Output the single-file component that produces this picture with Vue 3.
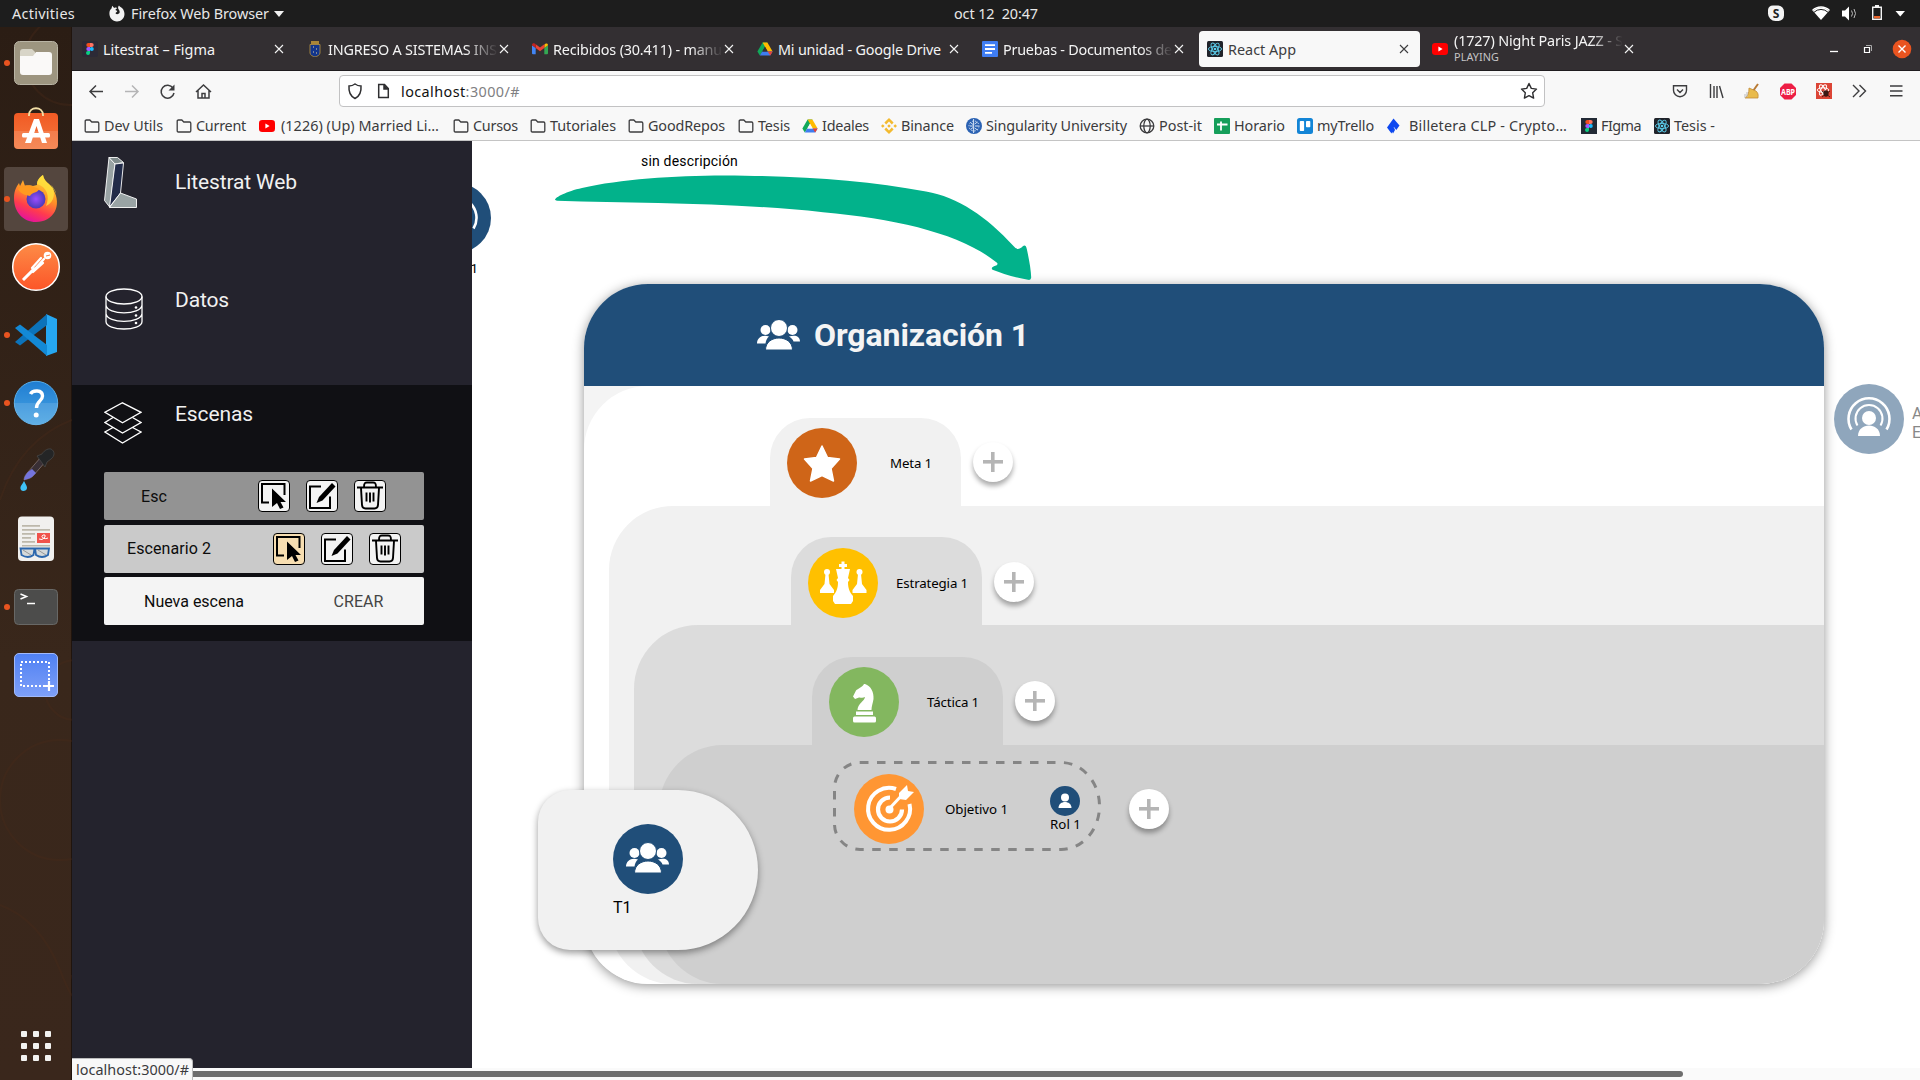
<script setup>
// Keeps a label at a fixed measure by adjusting its tracking.
const vFit = {
  mounted(el, { value }) {
    if (!value) return
    const range = document.createRange()
    range.selectNodeContents(el)
    const w = range.getBoundingClientRect().width
    el.style.letterSpacing = ((value - w) / el.textContent.length).toFixed(3) + 'px'
  },
}

const reactArt =
  '<rect width="16" height="16" rx="1.5" fill="#20232a"/><g fill="none" stroke="#5ccfee" stroke-width=".9"><ellipse cx="8" cy="8" rx="6.6" ry="2.6"/><ellipse cx="8" cy="8" rx="6.6" ry="2.6" transform="rotate(60 8 8)"/><ellipse cx="8" cy="8" rx="6.6" ry="2.6" transform="rotate(120 8 8)"/></g><circle cx="8" cy="8" r="1.3" fill="#5ccfee"/>'
const figmaArt =
  '<path d="M8 2H6.3a2 2 0 0 0 0 4H8z" fill="#f24e1e"/><path d="M8 2h1.7a2 2 0 0 1 0 4H8z" fill="#ff7262"/><path d="M8 6H6.3a2 2 0 0 0 0 4H8z" fill="#a259ff"/><circle cx="9.8" cy="8" r="2" fill="#1abcfe"/><path d="M8 10H6.3a2 2 0 1 0 1.7 2z" fill="#0acf83"/>'
const driveArt =
  '<path d="M5.6 1.5h4.8L5 11 2.8 14.6.4 10.5z" fill="#11a85a"/><path d="M5.6 1.5h4.8l5.2 9h-4.9z" fill="#ffbb00"/><path d="M2.8 14.6 5.2 10.5h10.4l-2.4 4.1z" fill="#3f7df0"/><path d="m10.7 10.5 4.9 0-2.4 4.1z" fill="#ea4335"/><path d="m8 5.8 2.6 4.7H5.3z" fill="#332f32"/>'

const icons = {
  folder: '<path d="M1.2 3.2c0-.8.4-1.200 1.200-1.200h3.400l2 2h5.800c.8 0 1.200.4 1.200 1.200v7.600c0 .8-.4 1.200-1.200 1.200H2.400c-.8 0-1.200-.4-1.200-1.200z" fill="none" stroke="#3c3c3e" stroke-width="1.3"/>',
  youtube: '<rect y="2" width="16" height="12" rx="3.2" fill="#f00"/><path d="m6.400 5.500 4.200 2.500-4.200 2.500z" fill="#fff"/>',
  drive: driveArt,
  driveLight: driveArt.replace('#332f32', '#f8f8f8'),
  binance:
    '<g fill="#f3ba2f"><path d="m8 0 4.600 4.600-1.800 1.800L8 3.600 5.200 6.400 3.400 4.600z"/><path d="m8 16 4.600-4.600-1.800-1.800L8 12.400 5.200 9.600l-1.800 1.800zM1.800 6.200 3.600 8 1.800 9.800 0 8zM14.200 6.200 16 8l-1.800 1.800L12.400 8zM8 6.200 9.800 8 8 9.800 6.200 8z"/></g>',
  su: '<circle cx="8" cy="8" r="8" fill="#2b62b3"/><g stroke="#d5e3f5" stroke-width="1" fill="none"><path d="M7.600 1v14M4.500 4.500l2.500 2M4 8h3M4.500 11.500l2.500-2M11.500 4 8.600 6M12.500 8H9M11.500 12 8.600 10"/><circle cx="8" cy="8" r="5" stroke-dasharray="1.500 1.500"/></g>',
  globe: '<g fill="none" stroke="#3c3c3e" stroke-width="1.300"><circle cx="8" cy="8" r="6.800"/><ellipse cx="8" cy="8" rx="3.200" ry="6.800"/><path d="M1.200 8h13.600"/></g>',
  sheets: '<rect width="16" height="16" rx="1" fill="#159e5a"/><path d="M7 3.500v9M3 6.500h10.500" stroke="#fff" stroke-width="1.800"/>',
  trello: '<rect width="16" height="16" rx="2.500" fill="#1385d6"/><rect x="2.800" y="3" width="4.300" height="10" rx=".8" fill="#fff"/><rect x="9" y="3" width="4.300" height="6.300" rx=".8" fill="#fff"/>',
  budaBlue: '<path d="m7.500.5 6 7-3.200 4.500-2.300-3-2.500 6.500L1 9.500z" fill="#0d48f0"/><path d="m4.800 11.500 3.200-2 1 2.500-2 3.500z" fill="#0d48f0"/>',
  figma: '<rect width="16" height="16" fill="#222a35"/>' + figmaArt,
  figmaTab: '<rect width="16" height="16" rx="2" fill="#2c2a36"/>' + figmaArt,
  react: reactArt,
  shieldUni: '<path d="M4 0h8v3H4z" fill="#a98537"/><path d="M3 3.500h10v8.500c0 2-3 3.500-5 4-2-.5-5-2-5-4z" fill="#12358c" stroke="#a98a43" stroke-width=".9"/><path d="M6 6h1M9 8h1M6 11h1M9 12h1" stroke="#e8d9a0"/>',
  gmail: '<path d="M1 13.200h2.700V7L0 4.200v8a1 1 0 0 0 1 1z" fill="#4285f4"/><path d="M12.300 13.200H15a1 1 0 0 0 1-1v-8L12.300 7z" fill="#34a853"/><path d="M12.300 3.800V7L16 4.200c0-1.800-1.600-2.200-2.600-1.400z" fill="#fbbc04"/><path d="M3.700 7V3.200L8 6.400l4.300-3.200V7L8 10.200z" fill="#ea4335"/><path d="M0 4.200 3.700 7V3.200l-1.100-.6C1.600 2 0 2.400 0 4.200z" fill="#c5221f"/>',
  docs: '<rect width="16" height="16" rx="1" fill="#3f7df3"/><path d="M3 4.200h10M3 8h10M3 11.800h7" stroke="#fff" stroke-width="1.800"/>',
}

const tabs = [
  { icon: 'figmaTab', text: 'Litestrat – Figma', w: 112 },
  { icon: 'shieldUni', text: 'INGRESO A SISTEMAS INS', w: 169, fade: true },
  { icon: 'gmail', text: 'Recibidos (30.411) - manu', w: 169, fade: true },
  { icon: 'drive', text: 'Mi unidad - Google Drive', w: 163 },
  { icon: 'docs', text: 'Pruebas - Documentos de', w: 169, fade: true },
  { icon: 'react', text: 'React App', w: 68, active: true },
  { icon: 'youtube', text: '(1727) Night Paris JAZZ - S', w: 169, fade: true, sub: 'PLAYING' },
]

const bookmarks = [
  { icon: 'folder', text: 'Dev Utils', x: 84, t: 104, w: 59 },
  { icon: 'folder', text: 'Current', x: 176, t: 196, w: 50 },
  { icon: 'youtube', text: '(1226) (Up) Married Li…', x: 259, t: 281, w: 158 },
  { icon: 'folder', text: 'Cursos', x: 453, t: 473, w: 45 },
  { icon: 'folder', text: 'Tutoriales', x: 530, t: 550, w: 66 },
  { icon: 'folder', text: 'GoodRepos', x: 628, t: 648, w: 77 },
  { icon: 'folder', text: 'Tesis', x: 738, t: 758, w: 32 },
  { icon: 'driveLight', text: 'Ideales', x: 802, t: 822, w: 47 },
  { icon: 'binance', text: 'Binance', x: 881, t: 901, w: 53 },
  { icon: 'su', text: 'Singularity University', x: 966, t: 986, w: 141 },
  { icon: 'globe', text: 'Post-it', x: 1139, t: 1159, w: 43 },
  { icon: 'sheets', text: 'Horario', x: 1214, t: 1234, w: 51 },
  { icon: 'trello', text: 'myTrello', x: 1297, t: 1317, w: 57 },
  { icon: 'budaBlue', text: 'Billetera CLP - Crypto…', x: 1386, t: 1409, w: 158 },
  { icon: 'figma', text: 'FIgma', x: 1581, t: 1601, w: 40 },
  { icon: 'react', text: 'Tesis -', x: 1654, t: 1674, w: 41 },
].map((b, i, all) => ({ ...b, span: (all[i + 1]?.x ?? 1730) - b.x }))

const scenes = [
  { name: 'Esc', w: 26, pad: 37, gap: 91, cls: 'dim' },
  { name: 'Escenario 2', w: 84, pad: 23, gap: 62, cls: 'light', on: true },
]
</script>

<template>
  <div class="screen">
    <header class="gnome">
      <span class="act" v-fit="63">Activities</span>
      <svg class="fxm" width="16" height="17" viewBox="0 0 16 17"><path d="M2.500 3.500 3.200.8l2 2.100C6.500 2.300 7.600 2.500 8.200 3L6.400 4.700c.3 1 1.600.9 1.900 1.300-.2 1-1.700 1.300-1.800 2.300.7 1.300 3 1.300 3.900-.2.700-1.400 0-3-.9-3.900C8.800 2.800 9 1.200 10 .4c.6 1.500 3.200 2 4.400 4.300C17.500 11 13.500 16.500 8 16.500S-.8 11 .8 5.800c.3-1 1-1.700 1.700-2.300z" fill="#f2f2f2"/></svg>
      <span class="app" v-fit="138">Firefox Web Browser</span>
      <i class="caret"></i>
      <span class="clock" v-fit="84">oct 12&nbsp; 20:47</span>
      <svg class="tray" width="150" height="27" viewBox="0 0 150 27">
        <path d="M8 5.500h5a6 6 0 0 1 6 6v4a5.500 5.500 0 0 1-6 5.500h-2a7.500 7.500 0 0 1-8-8v-3a5 5 0 0 1 5-4.500z" fill="#f4f4f4"/>
        <text x="11" y="17.500" text-anchor="middle" font-size="12" font-weight="700" fill="#222">S</text>
        <path d="M48 11a11 11 0 0 1 16 0l-8 9z" fill="#fff"/><path d="M47.500 10.500a12 12 0 0 1 17 0" stroke="#fff" stroke-width="1.500" fill="none"/><path d="M49 12.300a10 10 0 0 1 14 0" stroke="#1d1d1d" stroke-width="1" fill="none"/>
        <path d="M77 10.500h3l4-4v14l-4-4h-3z" fill="#fff"/><path d="M86.500 10.500q2 3 0 6M89 9q3 4.500 0 9" stroke="#bbb" fill="none"/>
        <path d="M107.700 7.200h8.600v12h-8.600zM110 5.800h4" fill="none" stroke="#f4f4f4" stroke-width="1.400"/><path d="M109 16h6v2.300h-6z" fill="#e9652b"/>
        <path d="M130.500 11h9.500l-4.750 5.500z" fill="#fff"/>
      </svg>
    </header>

    <div class="desk">
      <aside class="dock">
        <svg width="72" height="1053" viewBox="0 27 72 1053">
          <defs>
            <linearGradient id="org" x1="0" y1="0" x2="0" y2="1"><stop offset="0" stop-color="#f15a24"/><stop offset="1" stop-color="#f4793f"/></linearGradient>
            <linearGradient id="fx" x1=".8" y1="0" x2=".4" y2="1"><stop offset="0" stop-color="#ffe43b"/><stop offset=".45" stop-color="#ff9226"/><stop offset=".75" stop-color="#ff3b4e"/><stop offset="1" stop-color="#e5149a"/></linearGradient>
            <radialGradient id="fxg"><stop offset="0" stop-color="#9a4dff"/><stop offset="1" stop-color="#4a3bb8"/></radialGradient>
            <linearGradient id="pm" x1="0" y1="0" x2="0" y2="1"><stop offset="0" stop-color="#fd8c47"/><stop offset="1" stop-color="#fc5528"/></linearGradient>
            <linearGradient id="hp" x1="0" y1="0" x2="0" y2="1"><stop offset="0" stop-color="#1f7dd2"/><stop offset="1" stop-color="#4aa5e3"/></linearGradient>
            <linearGradient id="sc" x1="0" y1="0" x2="0" y2="1"><stop offset="0" stop-color="#4f80f3"/><stop offset="1" stop-color="#7ea0f8"/></linearGradient>
          </defs>
          <g fill="none" stroke="#4a2a19" stroke-width="2" opacity=".35"><circle cx="70" cy="60" r="45"/><circle cx="60" cy="800" r="60"/><circle cx="75" cy="690" r="30"/><path d="M0 905Q40 920 60 970T72 975M0 500Q20 440 72 420"/></g>
          <g fill="#e95420"><circle cx="7" cy="63" r="3"/><circle cx="7" cy="335" r="3"/><circle cx="7" cy="403" r="3"/><circle cx="7" cy="607" r="3"/></g>
          <rect x="14.500" y="41.500" width="43" height="43" rx="5" fill="#9d9580" stroke="#b9b4a5"/>
          <path d="M20 52a3 3 0 0 1 3-3h9l3 3v5H20z" fill="#d8d5c8"/><path d="M20 56h13l3-4h13a3 3 0 0 1 3 3v17a3 3 0 0 1-3 3H23a3 3 0 0 1-3-3z" fill="#faf9f8"/>
          <rect x="14" y="113" width="44" height="36" rx="4" fill="url(#org)"/><path d="M14 131h44v14a4 4 0 0 1-4 4H18a4 4 0 0 1-4-4z" fill="#fff" opacity=".13"/>
          <path d="M29 116v-1c0-9 14-9 14 0v1" fill="none" stroke="#f3dfa6" stroke-width="1.800"/>
          <path d="M34 119h5l8 24h-5l-5.500-17-5.500 17h-6z" fill="#fff"/><rect x="22" y="133" width="28" height="4.500" rx="1.500" fill="#fff"/>
          <rect x="4" y="167" width="64" height="64" rx="4" fill="#54463e"/>
          <circle cx="7" cy="199" r="3" fill="#e95420"/>
          <path d="M14 198c0-8 3-12 5-15l1 3 3-6 2 6c3-1 6-1 8 0l4-1c0-5 3-8 6-10 1 7 7 8 10 14 10 17 0 33-17 33-13 0-22-10-22-24z" fill="url(#fx)"/>
          <path d="M43 175c-5 3-6 7-6 9 10 3 13 12 9 22 9-4 10-15 5-21 2 2 5 6 5 9-2-9-12-10-13-19z" fill="#ffe23f" opacity=".8"/>
          <circle cx="36" cy="199" r="9.500" fill="url(#fxg)"/><path d="M18 189c7-6 13-3 16-2l5 2c-1 4-7 3-9 7-3-1-9-1-12-7z" fill="#ff9a1f"/>
          <circle cx="36" cy="267" r="23.300" fill="url(#pm)" stroke="#fff" stroke-width="1.500"/>
          <g stroke="#fff" stroke-linecap="round"><circle cx="47.500" cy="255.500" r="3.800" fill="#fff" stroke="none"/><path d="m44 259-11 12M41 258l-9 10m11-5-10 9" stroke-width="2.300"/><path d="m34 268-11 11M32 272l-8 8" stroke-width="1.700"/></g><path d="m46 256 4-1" stroke="#fc7c3c"/>
          <path d="m46 314 11 5v33l-11 4z" fill="#26a7f1"/><path d="m15 342 5 3.500L47 325v-11z" fill="#0c73ba"/><path d="M15 328l5-3.500 27 20.500v11z" fill="#1389d6"/>
          <circle cx="36" cy="403" r="21.700" fill="url(#hp)" stroke="#58ade8"/><path d="M14 403h44a22 22 0 0 1-44 0z" fill="#fff" opacity=".12"/>
          <path d="M30.500 394c2-4 12-4.500 12 2 0 5-6 5-6 12" fill="none" stroke="#fff" stroke-width="3.400"/><circle cx="36.200" cy="415" r="2.500" fill="#fff"/>
          <path d="m28 472 13-15 5 4-13 15c-3 3-7 3-9 4 0-3 2-6 4-8z" fill="#392f35" stroke="#9a8a86" stroke-width=".6"/><path d="m28 472 4-3 4 4-4 4c-3 2-6 2-8 3 0-3 2-6 4-8z" fill="#7474dd"/>
          <path d="m37 456 5-2c1-2 5-6 9-5 4 2 4 7 0 10l-4 3-2 5z" fill="#242526" stroke="#4a4a4a" stroke-width=".7"/><path d="M24 481c2 4 3 5 3 7s-2 3-3.500 3-3.500-1-3-4c.5-2 2-3 3.500-6z" fill="#3fc1f4"/>
          <rect x="18" y="516.500" width="36" height="44.500" rx="4" fill="#f1f0ee"/><g fill="#bdb8ab"><path d="M22 525h18v1.800H22zM22 529h28v1.800H22zM22 533h13v1.800H22zM22 537h9v1.800h-9zM22 541h13v1.800H22zM22 545h28v1.500H22z"/></g>
          <rect x="37" y="533" width="13" height="10" fill="#f0524c"/><path d="M39 539q3 2 6-2 1-3-2-2c-3 2 1 5 5 3" fill="none" stroke="#fff"/>
          <g fill="#d5d9da" stroke="#2c67ad" stroke-width="1.800"><path d="M20.500 548.500h14l-1 6.500q-5.500 4-12 0zM35 548.500h14l-1 6.500q-6 4-12 0z"/></g><path d="m23 550 8 5M38 550l8 5" stroke="#999"/>
          <rect x="14.500" y="589.500" width="43" height="35" rx="4" fill="#4c4c4b" stroke="#686866"/><path d="m20.500 594 6 2.500-6 2.500" fill="none" stroke="#fff" stroke-width="1.500"/><path d="M27 603.500h8" stroke="#fff" stroke-width="1.500"/>
          <rect x="14.500" y="653.500" width="43" height="43" rx="4.500" fill="url(#sc)" stroke="#a0b9fa"/><rect x="21" y="662" width="28" height="24" fill="none" stroke="#fff" stroke-width="2" stroke-dasharray="2 2"/><path d="M49 681v10M44 686h10" stroke="#fff" stroke-width="2.200"/>
          <g fill="#f3f3f1"><template v-for="r in 3" :key="r"><rect v-for="c in 3" :key="c" :x="9 + c * 12" :y="1019 + r * 12" width="6" height="6" rx="1"/></template></g>
        </svg>
      </aside>

      <main class="win">
        <div class="tabs">
          <div v-for="t in tabs" :key="t.text" class="tab" :class="{ active: t.active, fade: t.fade, two: t.sub }">
            <svg class="fav" width="16" height="16" viewBox="0 0 16 16" v-html="icons[t.icon]"></svg>
            <span class="tt"><span class="tl" v-fit="t.w">{{ t.text }}</span><small v-if="t.sub" v-fit="45">{{ t.sub }}</small></span>
            <svg class="x" width="10" height="10" viewBox="0 0 10 10"><path d="m1 1 8 8M9 1 1 9" stroke="currentColor" stroke-width="1.100"/></svg>
          </div>
          <svg class="wc" width="100" height="44" viewBox="1820 27 100 44"><path d="M1830 51.500h8" stroke="#fff" stroke-width="1.300"/><path d="M1864.500 47.500h5v5h-5z" fill="none" stroke="#fff" stroke-width="1.200"/><path d="M1866 45.500h5.500v5.500" fill="none" stroke="#aaa"/><circle cx="1902" cy="49" r="9.300" fill="#e95420"/><path d="m1898.500 45.500 7 7m0-7-7 7" stroke="#fff" stroke-width="1.400"/></svg>
        </div>

        <div class="nav">
          <svg width="267" height="41" viewBox="72 71 267 41" fill="none" stroke="#3d3d3f" stroke-width="1.500">
            <path d="M103 91.500H90m6-6-6 6 6 6"/><path d="M125 91.500h13m-6-6 6 6-6 6" stroke="#b5b5b6"/>
            <path d="M173 88a6.500 6.500 0 1 0 1 5"/><path d="M174.500 84.500v6h-6z" fill="#3d3d3f" stroke="none"/>
            <path d="m196 92 7.500-7 7.500 7M198 90.500V98h11v-7.500M202 98v-4.500h3V98"/>
          </svg>
          <div class="url">
            <svg width="50" height="24" viewBox="0 0 50 24" fill="none" stroke="#2e2e30" stroke-width="1.500"><path d="M15 5c2 1.500 4 2 6 2 .5 6-1 10-6 12.500C10 17 8.500 13 9 7c2 0 4-.5 6-2z"/><path d="M38.700 5.500h5.800l3.800 4v9h-9.600z"/><path d="M44 5.500v4.500h4.500" fill="#2e2e30"/></svg>
            <span class="addr" v-fit="119"><b>localhost</b>:3000/#</span>
            <svg class="star" width="18" height="18" viewBox="0 0 18 18"><path d="m9 1.500 2.300 4.900 5.200.7-3.800 3.700.9 5.300L9 13.600l-4.600 2.500.9-5.300-3.800-3.700 5.200-.7z" fill="none" stroke="#2e2e30" stroke-width="1.400" stroke-linejoin="round"/></svg>
          </div>
          <svg class="tools" width="250" height="41" viewBox="1660 71 250 41" fill="none" stroke="#3d3d3f" stroke-width="1.400">
            <path d="M1673.500 85.700h13v4.500a6.500 6.500 0 0 1-13 0zM1677 89.500l3 3 3-3"/>
            <path d="M1710.500 84v14M1714 86v12M1717 86v12M1719.500 86l3.500 12"/>
            <path d="m1758 84-5 7" stroke="#b87a35" stroke-width="2"/><path d="m1749 88 7 3c3 3 2 5 2 7h-13c3-2 4-5 4-10z" fill="#e9bb4c" stroke="#c28a38" stroke-width=".8"/><path d="M1745 94v4M1747 92v5" stroke="#bbb" stroke-width="1"/>
            <path d="M1784.500 83.500h7l4.500 4.500v7l-4.500 4.500h-7L1780 95v-7z" fill="#ed1e45" stroke="none"/><text x="1788" y="94.700" text-anchor="middle" font-size="8.500" font-weight="700" fill="#fff" stroke="none" textLength="14" lengthAdjust="spacingAndGlyphs">ABP</text>
            <rect x="1816" y="83" width="16" height="16" fill="#dc4536" stroke="none"/><g stroke="#fff" stroke-width="1"><ellipse cx="1823" cy="90" rx="5.800" ry="2.200"/><ellipse cx="1823" cy="90" rx="5.800" ry="2.200" transform="rotate(60 1823 90)"/><ellipse cx="1823" cy="90" rx="5.800" ry="2.200" transform="rotate(120 1823 90)"/></g><ellipse cx="1826" cy="93.500" rx="2.600" ry="3.200" fill="#3b1713" stroke="none"/><path d="m1822 91 8 6m-8 0 8-6" stroke="#3b1713" stroke-width=".9"/>
            <path d="m1853 85 6 6-6 6m6.500-12 6 6-6 6"/>
            <path d="M1890 86h12.500M1890 91h12.500M1890 95.700h12.500"/>
          </svg>
        </div>

        <div class="marks">
          <div v-for="b in bookmarks" :key="b.x" class="mark" :style="{ width: b.span + 'px' }">
            <svg width="16" height="16" viewBox="0 0 16 16" v-html="icons[b.icon]"></svg>
            <span :style="{ marginLeft: b.t - b.x - 16 + 'px' }" v-fit="b.w">{{ b.text }}</span>
          </div>
        </div>

        <div class="page">
          <nav class="side">
            <div class="item brand">
              <svg width="40" height="52" viewBox="104 157 40 52" stroke="#fff" stroke-width=".9" stroke-linejoin="round"><path d="m109 157.500 6 6-5 44-5.500-7z" fill="#99a3a4"/><path d="M109 157.500h8.500l6 5-8.500 1.500z" fill="#7f8b8c"/><path d="m115 164 8.500-1-3 30-11 14z" fill="#222b49"/><path d="m120.500 193 16 6v8.500h-27z" fill="#99a3a4"/></svg>
              <span v-fit="122">Litestrat Web</span>
            </div>
            <div class="item data">
              <svg width="38" height="42" viewBox="0 0 38 42" fill="none" stroke="#fff" stroke-width="1.300"><ellipse cx="19" cy="8.500" rx="18" ry="7.500"/><path d="M1 8.500v25c0 10 36 10 36 0v-25M1 17c1 10.500 35 10.500 36 0M1 25.500c1 10.500 35 10.500 36 0"/><g fill="#fff" stroke="none"><circle cx="31" cy="19.500" r="1.300"/><circle cx="31" cy="27.500" r="1.300"/><circle cx="31" cy="35" r="1.300"/></g></svg>
              <span v-fit="54">Datos</span>
            </div>
            <section class="scenes">
              <div class="item">
                <svg width="38" height="42" viewBox="0 0 38 42" fill="none" stroke="#fff" stroke-width="1.300"><path d="m18.500.8 18.500 9.500-18.500 10.500L1 10.300z"/><path d="M9 15.500 1 20.500l17.500 10.500L37 20.500l-8.500-5M9 25.500 1 30l17.500 11L37 30l-8.500-4.500"/></svg>
                <span v-fit="78">Escenas</span>
              </div>
              <div class="list">
                <div v-for="s in scenes" :key="s.name" class="row" :class="s.cls" :style="{ paddingLeft: s.pad + 'px' }">
                  <span v-fit="s.w" :style="{ width: s.w + 'px' }">{{ s.name }}</span>
                  <div class="btns" :style="{ marginLeft: s.gap + 'px' }">
                    <button :class="{ on: s.on }"><svg width="30" height="30" viewBox="0 0 30 30"><path d="M10 21.500H3V3h22.500v11" fill="none" stroke="#000" stroke-width="2"/><path d="m13 7.500 14 13.500h-5.500l3 5.500-3.500 1.500-3-6-5 4z"/></svg></button>
                    <button><svg width="30" height="30" viewBox="0 0 30 30"><path d="M14 5.500H3V27h20V15.500" fill="none" stroke="#000" stroke-width="2"/><path d="m25 2 3.500 3.500-13 14L9.500 22l2.500-6z"/></svg></button>
                    <button><svg width="30" height="30" viewBox="0 0 30 30" fill="none" stroke="#000" stroke-width="1.900"><path d="M2 6.500h26M9 6c0-4 1-4.500 3-4.500h6c2 0 3 .5 3 4.500M6 7l1 17c.2 2.500 1 3.500 3.500 3.500h9c2.500 0 3.300-1 3.500-3.500l1-17M11.500 11.500v9M15 11.500v10M18.500 11.500v9"/></svg></button>
                  </div>
                </div>
                <div class="row new"><span v-fit="100">Nueva escena</span><span class="crear" v-fit="50">CREAR</span></div>
              </div>
            </section>
          </nav>

          <div class="canvas">
            <div class="node peek"><svg width="70" height="70" viewBox="0 0 70 70"><use href="#agent"/></svg></div>
            <span class="peeknum">1</span>
            <span class="desc" v-fit="97">sin descripción</span>

            <svg width="0" height="0" class="defs">
              <g id="agent"><g fill="none" stroke="#fff" stroke-width="2.600"><path d="M17.500 45.500a20.500 20.500 0 1 1 35 0"/><path d="M23.500 41.500a13.500 13.500 0 1 1 23 0" stroke-width="2"/></g><circle cx="35" cy="34" r="7" fill="#fff"/><path d="M24 52c0-14 22-14 22 0z" fill="#fff"/></g>
              <g id="people" fill="#fff"><circle cx="8.500" cy="10" r="5"/><circle cx="35.500" cy="10" r="5"/><path d="M0 23.500c0-6 6-9.500 12-7-2 1.500-3 4-3.500 7zM43 21.500c0-5.500-5-7-11-5 2 1 4 3 4.500 5z"/><circle cx="22" cy="8" r="8.500" stroke="var(--ring)"/><path d="M8.500 30c0-16 27-16 27 0z" stroke="var(--ring)"/></g>
            </svg>

            <article class="board">
              <h1><svg width="44" height="31" viewBox="0 0 44 31"><use href="#people"/></svg><span v-fit="215">Organización 1</span></h1>
              <div class="lvl l1">
                <div class="line"><div class="chip"><i class="dot meta"><svg width="70" height="70" viewBox="0 0 70 70"><path d="m35 18 5.500 11.500 12 1.500-8.500 9.500 2.500 12.500L35 47.500 23.500 53 26 40.500 17.500 31l12-1.500z" fill="#fff" stroke="#fff" stroke-width="1.500" stroke-linejoin="round"/></svg></i><span v-fit="42">Meta 1</span></div><b class="plus"></b></div>
                <div class="lvl l2">
                  <div class="line"><div class="chip"><i class="dot est"><svg width="70" height="70" viewBox="0 0 70 70" fill="#fff"><path d="M33.500 13.500h3v2.500H39v3h-2.500V21H42l-2 9 1.500 2-1.500 2c0 6 1.500 10 5 14v5l-2 3H27l-2-3v-5c3.500-4 5-8 5-14l-1.500-2 1.500-2-2-9h5.500v-2H31v-3h2.500z"/><g id="pawn"><circle cx="19" cy="24" r="3"/><path d="M17.500 26h3l1 10 4.500 6v3H12v-3l4.500-6z"/></g><use href="#pawn" x="32.500"/></svg></i><span v-fit="72">Estrategia 1</span></div><b class="plus"></b></div>
                  <div class="lvl l3">
                    <div class="line"><div class="chip"><i class="dot tac"><svg width="70" height="70" viewBox="0 0 70 70" fill="#fff"><path d="M36 17c6 2 9 8 8.500 15-.5 4-2 7-2 11h-14c0-6 7-9 7.500-13-3 1.500-5 0-6 .5l-4 1.500-2-2.500 3-6c2-2 6-3 8-6.500z"/><rect x="27" y="44.500" width="17" height="3.500"/><rect x="24" y="49.500" width="23" height="6" rx="1.500"/></svg></i><span v-fit="52">Táctica 1</span></div><b class="plus"></b></div>
                    <div class="lvl l4">
                      <div class="line">
                        <div class="goal">
                          <svg class="dash" width="268" height="90" viewBox="0 0 268 90"><path d="M27 1.500h201a38.500 43.500 0 0 1 0 87H27a25.500 25.500 0 0 1-25.500-25.500V27A25.500 25.500 0 0 1 27 1.500z" fill="none"/></svg>
                          <i class="dot obj"><svg width="70" height="70" viewBox="0 0 70 70" fill="none" stroke="#fff"><path d="M42 15a21 21 0 1 0 13.500 15" stroke-width="4"/><path d="M36 23.500a12 12 0 1 0 12 12" stroke-width="4.200"/><circle cx="35.500" cy="35.500" r="4" fill="#fff" stroke="none"/><path d="m35 35 14-15" stroke-width="3"/><path d="m45 19 8-8 1 6 6 1-8 8-7-1z" fill="#fff" stroke="none"/></svg></i>
                          <span class="gl" v-fit="63">Objetivo 1</span>
                          <div class="role"><i><svg width="30" height="30" viewBox="0 0 30 30" fill="#fff"><circle cx="15" cy="11.500" r="4"/><path d="M8.500 22c0-8 13-8 13 0z"/></svg></i><span v-fit="31">Rol 1</span></div>
                        </div>
                        <b class="plus"></b>
                      </div>
                    </div>
                  </div>
                </div>
              </div>
            </article>

            <div class="team"><i class="dot"><svg width="70" height="70" viewBox="0 0 70 70"><use href="#people" x="13" y="19"/></svg></i><span>T1</span></div>
            <div class="node right"><svg width="70" height="70" viewBox="0 0 70 70"><use href="#agent"/></svg></div>
            <span class="rlabel">A<br>E</span>
            <svg class="arrow" width="500" height="120" viewBox="540 165 500 120"><path d="M555.200 200C554 198 566 191.500 582 188C625 178 690 174.500 745 175.700C812 176.500 870 181 926 191.500C958 197 987 217 1013.500 246Q1017 251 1021.500 247.500Q1025.500 243 1026.800 249C1029 259 1031 270 1031.200 277.500Q1031 280.500 1028 279.800C1014 277.500 1002 273.500 992.500 269.800Q990.500 267.500 994 266.300Q1000 264.500 996 262C961 234 898 219 823 212.300C735 202.500 640 203.500 557 200.800Z" fill="#02b28b"/></svg>
          </div>
          <div class="scroll"><div></div></div>
          <div class="status"><span v-fit="113">localhost:3000/#</span></div>
        </div>
      </main>
    </div>
  </div>
</template>

<style>
body { margin: 0; overflow: hidden; }
</style>

<style scoped>
.screen { width: 1920px; height: 1080px; display: flex; flex-direction: column; overflow: hidden; font-family: "Noto Sans", sans-serif; font-size: 14.4px; white-space: nowrap; background: #fff; }
svg { display: block; flex: none; }
i, b { font-style: normal; }
span { flex: none; }
.gnome { height: 27px; background: #1d1d1d; color: #e8e8e8; display: flex; align-items: center; line-height: 26px; }
.act { margin-left: 12px; width: 97px; }
.fxm { margin-right: 6px; }
.app { width: 143px; }
.caret { border: 5px solid transparent; border-top: 6px solid #f2f2f2; border-bottom: 0; }
.clock { margin-left: 670px; width: 84px; }
.tray { margin-left: 727px; }
.desk { flex: 1; display: flex; min-height: 0; }
.dock { width: 72px; background: linear-gradient(#2b1d14, #39271b 60%, #3a271c); box-shadow: inset -1px 0 #20140d; }
.win { width: 1848px; display: flex; flex-direction: column; }
.tabs { height: 44px; box-sizing: border-box; background: #332f32; border-bottom: 1px solid #1f1c1f; display: flex; align-items: flex-start; padding-left: 2px; color: #f4f4f4; }
.tab { width: 221px; height: 36px; margin: 4px 4px 0 0; display: flex; align-items: center; border-radius: 4px; }
.tab.active { background: #f8f8f8; color: #3d3d3f; }
.fav { margin: 0 5px 0 8px; }
.tt { width: 171px; line-height: 20px; padding-top: 2px; }
.tl { display: block; }
.fade .tt .tl { -webkit-mask-image: linear-gradient(90deg, #000 138px, transparent 170px); mask-image: linear-gradient(90deg, #000 138px, transparent 170px); }
.two .tt { line-height: 16px; padding-top: 0; }
.two .tl { line-height: 18px; margin-top: -3px; padding-left: 1px; }
small { display: block; font-size: 10.8px; line-height: 13px; color: #c6c5c6; padding-left: 1px; }
.wc { margin-left: auto; }
.nav { height: 41px; display: flex; background: #f8f8f8; }
.url { margin-top: 4px; width: 1204px; height: 30px; border: 1px solid #c2c2c3; border-radius: 4px; background: #fff; display: flex; align-items: center; }
.addr { margin-left: 11px; color: #808082; line-height: 30px; padding-top: 1px; }
.addr b { font-weight: 400; color: #111; }
.star { margin-left: auto; margin-right: 6px; }
.tools { margin-left: 115px; }
.marks { height: 28px; background: #f8f8f8; border-bottom: 1px solid #c4c4c4; display: flex; padding-left: 12px; color: #3b3b3d; }
.mark { display: flex; align-items: center; height: 27px; flex: none; }
.page { flex: 1; display: grid; grid-template: 927px 12px / 400px 1448px; position: relative; }
.side { background: #24232d; font-family: Roboto, sans-serif; color: #f1f1f1; display: flex; flex-direction: column; }
.item { display: flex; font-size: 21px; line-height: 26px; padding-left: 32px; }
.item span { margin-left: 33px; margin-top: -1px; }
.brand { padding-top: 15px; height: 132px; }
.brand span { margin-left: 31px; margin-top: 0; padding-top: 13px; }
.brand svg { margin-top: 1px; }
.data { height: 97px; padding-left: 33px; }
.data span { margin-left: 32px; margin-top: -1px; }
.scenes { background: #101014; height: 256px; }
.scenes .item { height: 70px; padding-top: 17px; }
.list { display: flex; flex-direction: column; gap: 4.500px; margin-left: 32px; width: 320px; }
.row { height: 48px; border-radius: 2px; box-sizing: border-box; display: flex; align-items: center; color: #0c0c0c; font-size: 16px; }
.dim { background: #939393; }
.light { background: #cacaca; }
.new { background: #f4f4f4; padding-left: 40px; }
.new span { margin-top: 1px; }
.new span:first-child { width: 189.500px; }
.crear { color: #444; }
.btns { display: flex; gap: 16px; }
button { width: 32px; height: 32px; padding: 0; border: 1px solid #000; border-radius: 4px; background: #f4f4f4; }
button.on { background: #f7deb1; }
.canvas { position: relative; overflow: hidden; background: #fff; font-size: 13.3px; }
.defs { position: absolute; --ring: #204e79; }
.node { position: absolute; width: 70px; height: 70px; border-radius: 50%; background: #204e79; }
.peek { left: -51px; top: 42px; }
.peeknum { position: absolute; left: 0; top: 119px; width: 6px; line-height: 18px; font-family: Roboto, sans-serif; text-indent: -1.500px; }
.desc { position: absolute; left: 169px; top: 10px; font: 14px/20px Roboto, sans-serif; }
.board { position: absolute; left: 112px; top: 143px; width: 1240px; height: 700px; border-radius: 64px; overflow: hidden; background: #f4f4f4; display: flex; flex-direction: column; box-shadow: 0 2px 12px rgba(0, 0, 0, .42); }
h1 { margin: 0; height: 102px; background: #204e79; color: #f4f4f4; font: 700 32px/100px Roboto, sans-serif; display: flex; align-items: center; padding-left: 173px; gap: 13px; --ring: #204e79; }
.lvl { flex: 1; display: flex; flex-direction: column; border-radius: 64px 0 0 64px; }
.lvl .lvl { margin-left: 25px; }
.l1 { background: #fff; --c: #f1f1f1; --m: 186px; }
.l2 { background: #f1f1f1; --c: #dcdcdc; --m: 182px; }
.l3 { background: #dcdcdc; --c: #cfcfcf; --m: 178px; }
.l4 { background: #cfcfcf; --m: 174px; }
.line { height: 120px; display: flex; align-items: flex-end; padding-left: var(--m); }
.l2 > .line { height: 119px; }
.chip { width: 191px; height: 88px; box-sizing: border-box; border-radius: 40px 40px 0 0; background: var(--c); display: flex; align-items: center; padding: 2px 0 0 17px; }
.l2 > .line .chip { padding-top: 4px; }
.chip span { margin-left: 18px; }
.l1 > .line .chip span { margin-left: 33px; }
.l3 > .line .chip span { margin-left: 28px; }
.dot { width: 70px; height: 70px; border-radius: 50%; flex: none; display: block; }
.meta { background: #cf6518; }
.est { background: #ffc000; }
.tac { background: #83b75f; }
.obj { background: #ff9633; }
.plus { width: 40px; height: 40px; border-radius: 50%; margin: 0 0 24px 12px; box-shadow: 0 4px 5px rgba(0, 0, 0, .33); flex: none; background: linear-gradient(#b5b5b5, #b5b5b5) center / 20px 3.600px no-repeat, linear-gradient(#b5b5b5, #b5b5b5) center / 3.600px 20px no-repeat, #fff; }
.l2 > .line > .plus { margin-bottom: 23px; }
.l3 > .line > .plus { margin-bottom: 24px; }
.l4 > .line { align-items: flex-start; padding-top: 16px; box-sizing: border-box; }
.l4 > .line > .plus { margin: 28px 0 0 28px; }
.goal { position: relative; width: 268px; height: 90px; display: flex; align-items: center; box-sizing: border-box; padding: 5px 0 0 21px; }
.dash { position: absolute; left: 0; top: 0; stroke: #858585; stroke-width: 3; stroke-dasharray: 8.500 8.500; }
.gl { margin-left: 21px; width: 62px; }
.role { width: 30px; margin-left: 43px; }
.role i { display: block; width: 30px; height: 30px; border-radius: 50%; background: #204e79; }
.role span { display: block; line-height: 16px; }
.team { position: absolute; left: 66px; top: 649px; width: 220px; height: 160px; border-radius: 32px 80px 80px 32px; background: #f1f1f1; box-shadow: 0 3px 7px rgba(0, 0, 0, .4); padding: 34px 0 0 75px; box-sizing: border-box; font: 16px/24px Roboto, sans-serif; --ring: #204e79; }
.team .dot { background: #204e79; margin-bottom: 2px; }
.right { left: 1362px; top: 243px; background: #8fa6bc; }
.rlabel { position: absolute; left: 1440px; top: 263px; font: 16px/19px Roboto, sans-serif; color: #888; }
.arrow { position: absolute; left: 68px; top: 24px; }
.scroll { grid-column: 1 / 3; background: #fafafa; padding: 3px 0; }
.scroll div { width: 1611px; height: 6px; border-radius: 3px; background: #6e6e6e; }
.status { position: absolute; left: 0; bottom: 0; width: 116px; height: 21px; background: #f8f8f8; border: solid #bcbcbc; border-width: 1px 1px 0 0; border-radius: 0 4px 0 0; padding-left: 4px; line-height: 22px; color: #3b3b3d; }
</style>
